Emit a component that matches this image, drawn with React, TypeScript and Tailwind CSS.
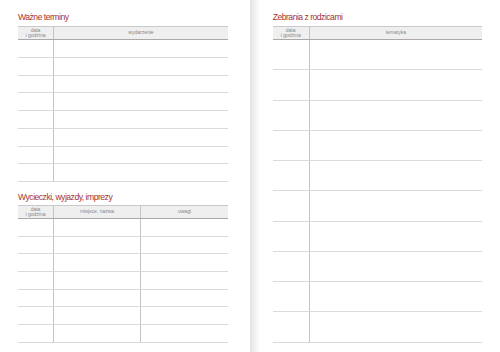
type Col = { label: string[]; width?: string };

interface PlannerTableProps {
  cols: Col[];
  rows: number;
  rowClass: string;
}

function PlannerTable({ cols, rows, rowClass }: PlannerTableProps) {
  return (
    <div className="flex flex-col">
      <div className="flex h-[14px] border-t border-b border-t-[#c9c9c9] border-b-[#a9a9a9] bg-[#efefef]">
        {cols.map((c, i) => (
          <div
            key={i}
            className={`${c.width ?? 'flex-1'} ${i > 0 ? 'border-l border-[#c4c4c4]' : ''} flex flex-col items-center justify-center text-[5px] leading-[5.4px] text-[#888888]`}
          >
            {c.label.map((l) => (
              <span key={l}>{l}</span>
            ))}
          </div>
        ))}
      </div>
      {Array.from({ length: rows }).map((_, r) => (
        <div key={r} className={`flex border-b border-[#dadada] ${rowClass}`}>
          {cols.map((c, i) => (
            <div
              key={i}
              className={`${c.width ?? 'flex-1'} ${i > 0 ? 'border-l border-[#c4c4c4]' : ''}`}
            />
          ))}
        </div>
      ))}
    </div>
  );
}

function Title({ children, className = '' }: { children: string; className?: string }) {
  return (
    <h2
      className={`h-[10px] text-[8.6px] leading-[10px] tracking-[-0.5px] text-[#a8322d] whitespace-nowrap ${className}`}
    >
      {children}
    </h2>
  );
}

const DATE = { label: ['data', 'i godzina'] };

export default function App() {
  return (
    <div className="flex w-[500px] h-[352px] overflow-hidden bg-white font-['Liberation_Sans',Arial,sans-serif]">
      <section className="w-[250px] shrink-0 pl-[18px] pr-[22px] pt-[12px]">
        <Title className="mb-[4px]">Ważne terminy</Title>
        <PlannerTable
          cols={[{ ...DATE, width: 'w-[35px]' }, { label: ['wydarzenie'] }]}
          rows={8}
          rowClass="h-[17.75px]"
        />
        <Title className="mt-[10px] mb-[3px]">Wycieczki, wyjazdy, imprezy</Title>
        <PlannerTable
          cols={[
            { ...DATE, width: 'w-[35px]' },
            { label: ['miejsce, nazwa'], width: 'w-[87px]' },
            { label: ['uwagi'] }
          ]}
          rows={7}
          rowClass="h-[17.66px]"
        />
      </section>
      <div className="w-[10px] shrink-0 bg-linear-to-r from-[#e3e3e3] to-white" />
      <section className="flex-1 pl-[12.7px] pr-[18px] pt-[12px]">
        <Title className="mb-[4px]">Zebrania z rodzicami</Title>
        <PlannerTable
          cols={[{ ...DATE, width: 'w-[36px]' }, { label: ['tematyka'] }]}
          rows={10}
          rowClass="h-[30.25px]"
        />
      </section>
    </div>
  );
}
